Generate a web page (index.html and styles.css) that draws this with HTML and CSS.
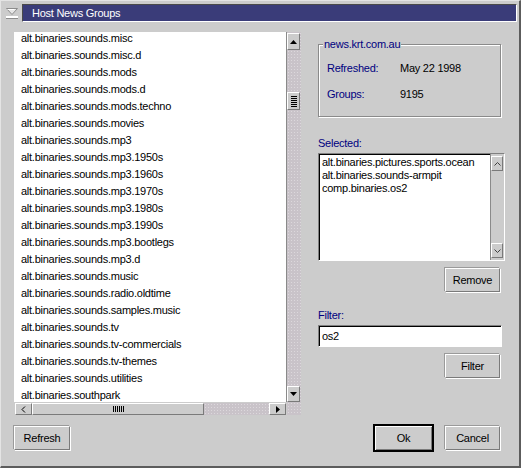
FILE: index.html
```html
<!DOCTYPE html>
<html>
<head>
<meta charset="utf-8">
<title>Host News Groups</title>
<link rel="stylesheet" href="styles.css">
</head>
<body>
<div class="window">
  <div class="header">
    <svg class="sysicon" width="12" height="11" viewBox="0 0 12 11">
      <path d="M0.5 0.5 H11.5 L6 6.5 Z" fill="#e6e6e6" stroke="#8c8c8c" stroke-width="1"/>
      <path d="M1.5 1.5 H8.5" stroke="#ffffff" stroke-width="1"/>
      <rect x="0" y="8" width="12" height="2" fill="#ffffff"/>
      <rect x="0" y="10" width="12" height="1" fill="#8c8c8c"/>
    </svg>
    <div class="titlebar">Host News Groups</div>
  </div>

  <div class="main">
    <div class="listframe">
      <div class="list">
        <div class="items">
          <div>alt.binaries.sounds.misc</div>
          <div>alt.binaries.sounds.misc.d</div>
          <div>alt.binaries.sounds.mods</div>
          <div>alt.binaries.sounds.mods.d</div>
          <div>alt.binaries.sounds.mods.techno</div>
          <div>alt.binaries.sounds.movies</div>
          <div>alt.binaries.sounds.mp3</div>
          <div>alt.binaries.sounds.mp3.1950s</div>
          <div>alt.binaries.sounds.mp3.1960s</div>
          <div>alt.binaries.sounds.mp3.1970s</div>
          <div>alt.binaries.sounds.mp3.1980s</div>
          <div>alt.binaries.sounds.mp3.1990s</div>
          <div>alt.binaries.sounds.mp3.bootlegs</div>
          <div>alt.binaries.sounds.mp3.d</div>
          <div>alt.binaries.sounds.music</div>
          <div>alt.binaries.sounds.radio.oldtime</div>
          <div>alt.binaries.sounds.samples.music</div>
          <div>alt.binaries.sounds.tv</div>
          <div>alt.binaries.sounds.tv-commercials</div>
          <div>alt.binaries.sounds.tv-themes</div>
          <div>alt.binaries.sounds.utilities</div>
          <div>alt.binaries.southpark</div>
        </div>
      </div>
      <div class="vscroll">
        <div class="sbtn vbtn up">
          <svg width="7" height="4" viewBox="0 0 7 4"><path d="M3.5 0 L7 4 H0 Z" fill="#000"/></svg>
        </div>
        <div class="vgap1"></div>
        <div class="sbtn vthumb">
          <svg width="6" height="11" viewBox="0 0 6 11">
            <rect x="0" y="0" width="6" height="1" fill="#000"/>
            <rect x="0" y="2" width="6" height="1" fill="#000"/>
            <rect x="0" y="4" width="6" height="1" fill="#000"/>
            <rect x="0" y="6" width="6" height="1" fill="#000"/>
            <rect x="0" y="8" width="6" height="1" fill="#000"/>
            <rect x="0" y="10" width="6" height="1" fill="#000"/>
          </svg>
        </div>
        <div class="vgap2"></div>
        <div class="sbtn vbtn down">
          <svg width="7" height="4" viewBox="0 0 7 4"><path d="M0 0 H7 L3.5 4 Z" fill="#000"/></svg>
        </div>
      </div>
      <div class="hscroll">
        <div class="sbtn hbtn">
          <svg width="5" height="7" viewBox="0 0 5 7"><path d="M4 0.5 L1 3.5 L4 6.5" fill="none" stroke="#000" stroke-width="1"/></svg>
        </div>
        <div class="sbtn hthumb">
          <svg width="11" height="6" viewBox="0 0 11 6">
            <rect x="0" y="0" width="1" height="6" fill="#000"/>
            <rect x="2" y="0" width="1" height="6" fill="#000"/>
            <rect x="4" y="0" width="1" height="6" fill="#000"/>
            <rect x="6" y="0" width="1" height="6" fill="#000"/>
            <rect x="8" y="0" width="1" height="6" fill="#000"/>
            <rect x="10" y="0" width="1" height="6" fill="#000"/>
          </svg>
        </div>
        <div class="hgap"></div>
        <div class="sbtn hbtn">
          <svg width="4" height="7" viewBox="0 0 4 7"><path d="M0 0 L4 3.5 L0 7 Z" fill="#000"/></svg>
        </div>
      </div>
      <div class="corner"></div>
    </div>

    <div class="side">
      <fieldset class="group">
        <legend>news.krt.com.au</legend>
        <div class="info">
          <span class="lbl">Refreshed:</span><span class="val">May 22 1998</span>
          <span class="lbl">Groups:</span><span class="val">9195</span>
        </div>
      </fieldset>

      <div class="label sel-label">Selected:</div>
      <div class="selbox">
        <div class="selitems">
          <div>alt.binaries.pictures.sports.ocean</div>
          <div>alt.binaries.sounds-armpit</div>
          <div>comp.binaries.os2</div>
        </div>
        <div class="selscroll">
          <div class="sbtn sbtn-small">
            <svg width="7" height="4" viewBox="0 0 7 4"><path d="M0.5 3.5 L3.5 0.5 L6.5 3.5" fill="none" stroke="#404040" stroke-width="1"/></svg>
          </div>
          <div class="sbtn sbtn-small">
            <svg width="7" height="4" viewBox="0 0 7 4"><path d="M0.5 0.5 L3.5 3.5 L6.5 0.5" fill="none" stroke="#404040" stroke-width="1"/></svg>
          </div>
        </div>
      </div>
      <div class="btnrow"><div class="btn">Remove</div></div>

      <div class="label filter-label">Filter:</div>
      <div class="input">os2</div>
      <div class="btnrow"><div class="btn">Filter</div></div>
    </div>
  </div>

  <div class="footer">
    <div class="btn btn-refresh">Refresh</div>
    <div class="spacer"></div>
    <div class="btn btn-default">Ok</div>
    <div class="btn btn-cancel">Cancel</div>
  </div>
</div>
</body>
</html>
```

FILE: styles.css
```css
html, body {
  margin: 0;
  padding: 0;
  background: #cccccc;
}

body {
  font-family: "Liberation Sans", Arial, sans-serif;
  font-size: 11px;
  letter-spacing: -0.25px;
  color: #000;
}

.window {
  box-sizing: border-box;
  width: 521px;
  height: 468px;
  background: #cccccc;
  border-top: 1px solid #e4e4e4;
  border-left: 1px solid #e4e4e4;
  border-right: 2px solid #5c5c5c;
  border-bottom: 2px solid #5c5c5c;
  display: flex;
  flex-direction: column;
}

/* ---------- header ---------- */
.header {
  display: flex;
  align-items: center;
  margin-top: 3px;
  padding-left: 5px;
  margin-right: 2px;
  height: 18px;
}

.sysicon {
  display: block;
  flex: 0 0 auto;
  margin-right: 4px;
  margin-top: 1px;
}

.titlebar {
  flex: 1;
  box-sizing: border-box;
  height: 18px;
  background: #3a3c79;
  color: #ffffff;
  border-top: 1px solid #4a4a4a;
  border-left: 1px solid #4a4a4a;
  border-bottom: 1px solid #ffffff;
  border-right: 1px solid #ffffff;
  padding-left: 9px;
  line-height: 16px;
  white-space: nowrap;
}

/* ---------- main ---------- */
.main {
  display: flex;
  margin-top: 10px;
  padding-left: 13px;
}

.listframe {
  display: grid;
  grid-template-columns: 272px 15px;
  grid-template-rows: 370px 13px;
}

.list {
  background: #ffffff;
  overflow: hidden;
}

.items {
  margin-top: -2px;
  padding-left: 7px;
  line-height: 17px;
  white-space: nowrap;
}

.stipple {
  background-color: #c8c2c8;
}

.vscroll,
.hgap,
.corner,
.vgap1,
.vgap2 {
  background-color: #c9c3c9;
  background-image: radial-gradient(circle, #dcd8dc 0.7px, transparent 0.9px);
  background-size: 3px 3px;
}

.vscroll {
  box-sizing: border-box;
  border-left: 1px solid #8a8a8a;
  display: flex;
  flex-direction: column;
  padding-right: 1px;
}

.sbtn {
  box-sizing: border-box;
  background: #cccccc;
  border-top: 1px solid #ffffff;
  border-left: 1px solid #ffffff;
  border-right: 1px solid #7a7a7a;
  border-bottom: 1px solid #7a7a7a;
  display: flex;
  align-items: center;
  justify-content: center;
}

.sbtn svg {
  display: block;
}

.vbtn.up {
  margin-top: 1px;
  height: 17px;
}

.vgap1 {
  height: 42px;
}

.vthumb {
  height: 18px;
}

.vgap2 {
  flex: 1;
}

.vbtn.down {
  height: 16px;
}

.hscroll {
  display: flex;
  padding-top: 1px;
  padding-left: 1px;
  background: #cccccc;
}

.hbtn {
  width: 17px;
  height: 12px;
}

.hthumb {
  width: 172px;
  height: 12px;
}

.hgap {
  flex: 1;
}

.corner {
  border-left: 1px solid #cccccc;
}

/* ---------- side panel ---------- */
.side {
  width: 187px;
  margin-left: 17px;
  display: flex;
  flex-direction: column;
}

.group {
  box-sizing: border-box;
  width: 183px;
  height: 79px;
  margin: 6px 0 0 0;
  padding: 0 0 0 4px;
  border: 1px solid #8a8a8a;
  box-shadow: inset 1px 1px 0 #ffffff, 1px 1px 0 #ffffff;
  min-width: 0;
}

.group legend {
  padding: 0 1px;
  line-height: 13px;
  color: #000080;
  background: #cccccc;
}

.info {
  display: grid;
  grid-template-columns: 73px auto;
  row-gap: 13px;
  line-height: 13px;
  margin-top: 11px;
  padding-left: 4px;
}

.lbl {
  color: #000080;
}

.label {
  color: #000080;
  line-height: 13px;
}

.sel-label {
  margin-top: 20px;
}

.selbox {
  box-sizing: border-box;
  margin-top: 3px;
  width: 187px;
  height: 108px;
  border-top: 1px solid #808080;
  border-left: 1px solid #808080;
  border-right: 1px solid #ffffff;
  border-bottom: 1px solid #ffffff;
  display: flex;
}

.selitems {
  flex: 1;
  background: #ffffff;
  box-shadow: inset 1px 1px 0 #000000;
  padding: 2px 0 0 3px;
  line-height: 13px;
  white-space: nowrap;
}

.selscroll {
  width: 14px;
  box-sizing: border-box;
  border-left: 1px solid #8a8a8a;
  background: #cccccc;
  display: flex;
  flex-direction: column;
  justify-content: space-between;
  padding: 2px 1px 2px 0;
}

.sbtn-small {
  width: 12px;
  height: 15px;
}

.btnrow {
  display: flex;
  justify-content: flex-end;
  padding-right: 4px;
  margin-top: 6px;
}

.btn {
  box-sizing: border-box;
  width: 55px;
  height: 24px;
  margin: 1px;
  background: #cccccc;
  border-top: 1px solid #ffffff;
  border-left: 1px solid #ffffff;
  border-right: 1px solid #7a7a7a;
  border-bottom: 1px solid #7a7a7a;
  box-shadow: -1px -1px 0 #9a9a9a, 1px 1px 0 #ffffff;
  display: flex;
  align-items: center;
  justify-content: center;
  line-height: 13px;
}

.filter-label {
  margin-top: 16px;
}

.input {
  box-sizing: border-box;
  margin-top: 3px;
  width: 184px;
  height: 22px;
  background: #ffffff;
  border-top: 1px solid #808080;
  border-left: 1px solid #808080;
  border-right: 1px solid #ffffff;
  border-bottom: 1px solid #ffffff;
  box-shadow: inset 1px 1px 0 #000000;
  padding: 4px 0 0 3px;
  line-height: 13px;
}

/* ---------- footer ---------- */
.footer {
  display: flex;
  align-items: center;
  margin-top: 9px;
  height: 28px;
  padding-left: 12px;
  padding-right: 18px;
}

.btn-refresh {
  width: 56px;
}

.spacer {
  flex: 1;
}

.btn-default {
  width: 61px;
  height: 28px;
  margin: 0 10px 0 0;
  border: 2px solid #000000;
  box-shadow: inset 1px 1px 0 #ffffff, inset -1px -1px 0 #7a7a7a;
}

.btn-cancel {
  width: 55px;
}
```
